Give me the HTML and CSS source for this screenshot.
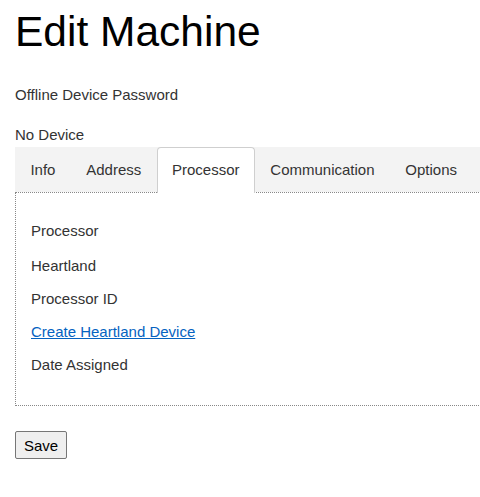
FILE: index.html
```html
<!DOCTYPE html>
<html>
<head>
<meta charset="utf-8">
<title>Edit Machine</title>
<link rel="stylesheet" href="styles.css">
</head>
<body>
<div class="page">
  <h1 class="title">Edit Machine</h1>
  <p class="line first">Offline Device Password</p>
  <p class="line second">No Device</p>
  <div class="tabs">
    <div class="tab">Info</div>
    <div class="tab">Address</div>
    <div class="tab active">Processor</div>
    <div class="tab">Communication</div>
    <div class="tab">Options</div>
  </div>
  <div class="panel">
    <div class="item top">Processor</div>
    <div class="item">Heartland</div>
    <div class="item">Processor ID</div>
    <div class="item"><a class="link" href="#">Create Heartland Device</a></div>
    <div class="item last">Date Assigned</div>
  </div>
  <button class="save" type="button">Save</button>
</div>
</body>
</html>
```
FILE: styles.css
```css
html, body {
  margin: 0;
  padding: 0;
  background: #fff;
  overflow: hidden;
}
body {
  font-family: "Liberation Sans", Arial, sans-serif;
  font-size: 15px;
  color: #333;
}
.page {
  width: 620px;
  padding: 8px 0 0 15px;
}
.title {
  margin: 0;
  font-size: 42.5px;
  line-height: 48px;
  font-weight: normal;
  color: #000;
}
.line {
  margin: 0;
  line-height: 21px;
}
.first { margin-top: 28px; }
.second { margin-top: 19px; margin-bottom: 2px; }
.tabs {
  display: flex;
  background: #f3f3f3;
  height: 45px;
  position: relative;
  z-index: 1;
}
.tab {
  padding: 11px 14.4px 12px;
  line-height: 21px;
  border: 1px solid transparent;
  border-bottom: none;
  border-radius: 4px 4px 0 0;
  color: #333;
}
.tab.active {
  background: #fff;
  border-color: #cfcfcf;
  box-sizing: border-box;
  margin-bottom: -1px;
  height: 46px;
}
.panel {
  border: 1px dotted #888;
  padding: 27px 15px 30px;
}
.item {
  line-height: 21px;
  margin-bottom: 12px;
}
.item.top { margin-bottom: 14px; }
.item.last { margin-bottom: 0; }
.link {
  color: #0563c1;
  text-decoration: underline;
}
.save {
  margin-top: 25px;
  height: 28px;
  padding: 0 8px;
  font-family: "Liberation Sans", Arial, sans-serif;
  font-size: 15px;
  color: #000;
  background: #efefef;
  border: 1px solid #767676;
  border-radius: 2px;
}
```
